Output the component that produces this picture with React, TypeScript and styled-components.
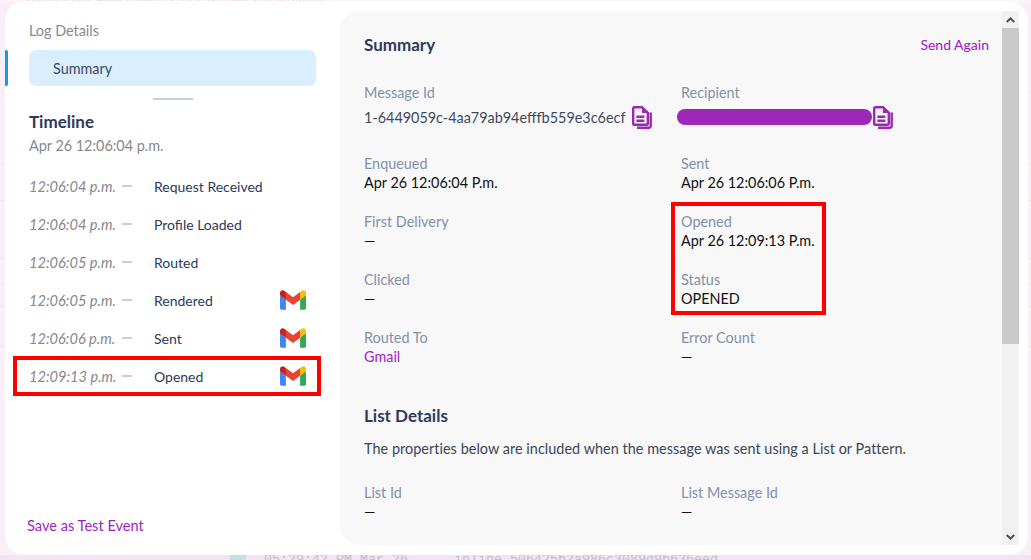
import styled, { createGlobalStyle } from "styled-components";

const purple = "#a01fc4";

const timeline = [
  { time: "12:06:04 p.m.", label: "Request Received" },
  { time: "12:06:04 p.m.", label: "Profile Loaded" },
  { time: "12:06:05 p.m.", label: "Routed" },
  { time: "12:06:05 p.m.", label: "Rendered", gmail: true },
  { time: "12:06:06 p.m.", label: "Sent", gmail: true },
  { time: "12:09:13 p.m.", label: "Opened", gmail: true, marked: true },
];

const backdropRows = [90, 73, 36, 58, 26, 22, 40];

function GmailIcon() {
  return (
    <svg width="26" height="20" viewBox="0 0 256 193">
      <path fill="#4285F4" d="M58.182 192.05V93.14L27.507 65.077 0 49.504v125.091c0 9.658 7.825 17.455 17.455 17.455h40.727Z" />
      <path fill="#34A853" d="M197.818 192.05h40.727c9.659 0 17.455-7.826 17.455-17.455V49.505l-31.156 17.837-27.026 25.798v98.91Z" />
      <path fill="#EA4335" d="m58.182 93.14-4.174-38.647 4.174-36.989L128 69.868l69.818-52.364 4.669 34.992-4.669 40.644L128 145.504z" />
      <path fill="#FBBC04" d="M197.818 17.504V93.14L256 49.504V26.231c0-21.585-24.64-33.89-41.89-20.945l-16.292 12.218Z" />
      <path fill="#C5221F" d="m0 49.504 26.759 20.07L58.182 93.14V17.504L41.89 5.286C24.61-7.66 0 4.646 0 26.23v23.273Z" />
    </svg>
  );
}

function CopyIcon() {
  return (
    <svg width="20" height="23" viewBox="0 0 20 23" fill="none" stroke="#9c27b0" strokeWidth="2.4">
      <path d="M2.2 1.2h7.8l5.8 5.6v11a1 1 0 0 1-1 1H2.2a1 1 0 0 1-1-1V2.2a1 1 0 0 1 1-1Z" />
      <path d="M10 2v5h5z" fill="#9c27b0" stroke="none" />
      <path d="M4.4 10.8h8M4.4 14.8h8" />
      <path d="M18.7 6.5V20a1.7 1.7 0 0 1-1.7 1.7H5" />
    </svg>
  );
}

function Chevron({ down }: { down?: boolean }) {
  return (
    <svg width="9" height="6" viewBox="0 0 9 6" fill="none" stroke="#505050" strokeWidth="2">
      <path d={down ? "M.7 1l3.8 3.6L8.3 1" : "M.7 5l3.8-3.6L8.3 5"} />
    </svg>
  );
}

export default function App() {
  return (
    <Page>
      <GlobalStyle />
      <Backdrop>
        <BackdropTop>Notifications Flow Templates Lists Patterns Log Attributes</BackdropTop>
        {backdropRows.map((height, i) => (
          <BackdropRow key={i} $height={height} />
        ))}
        <BackdropBottom>
          <BackdropIcon />
          <BackdropText>05:29:42 PM Mar 26</BackdropText>
          <BackdropText>inline_506425b2a986c3089d9b636eed</BackdropText>
        </BackdropBottom>
      </Backdrop>

      <Modal>
        <Sidebar>
          <ActiveBar />
          <SideHeading>Log Details</SideHeading>
          <SummaryTab>Summary</SummaryTab>
          <Divider />
          <TimelineTitle>Timeline</TimelineTitle>
          <TimelineDate>Apr 26 12:06:04 p.m.</TimelineDate>
          <TimelineList>
            {timeline.map((row) => (
              <TimelineRow key={row.time + row.label} $marked={row.marked}>
                <RowTime>{row.time}</RowTime>
                <RowDash />
                <RowLabel>{row.label}</RowLabel>
                {row.gmail && <GmailIcon />}
              </TimelineRow>
            ))}
          </TimelineList>
          <SaveLink>Save as Test Event</SaveLink>
        </Sidebar>

        <Panel>
          <PanelBody>
            <PanelHeader>
              <SectionTitle>Summary</SectionTitle>
              <SendAgain>Send Again</SendAgain>
            </PanelHeader>

            <FieldGrid>
              <IdField>
                <FieldLabel>Message Id</FieldLabel>
                <IdValue>
                  <MessageId>1-6449059c-4aa79ab94efffb559e3c6ecf</MessageId>
                  <CopyIcon />
                </IdValue>
              </IdField>
              <IdField>
                <FieldLabel>Recipient</FieldLabel>
                <IdValue>
                  <Redacted />
                  <CopyIcon />
                </IdValue>
              </IdField>
              <Field>
                <FieldLabel>Enqueued</FieldLabel>
                <FieldValue>Apr 26 12:06:04 P.m.</FieldValue>
              </Field>
              <Field>
                <FieldLabel>Sent</FieldLabel>
                <FieldValue>Apr 26 12:06:06 P.m.</FieldValue>
              </Field>
              <Field>
                <FieldLabel>First Delivery</FieldLabel>
                <FieldValue>—</FieldValue>
              </Field>
              <Field>
                <FieldLabel>Opened</FieldLabel>
                <FieldValue>Apr 26 12:09:13 P.m.</FieldValue>
              </Field>
              <Field>
                <FieldLabel>Clicked</FieldLabel>
                <FieldValue>—</FieldValue>
              </Field>
              <Field>
                <FieldLabel>Status</FieldLabel>
                <FieldValue>OPENED</FieldValue>
              </Field>
              <Field>
                <FieldLabel>Routed To</FieldLabel>
                <FieldValue $link>Gmail</FieldValue>
              </Field>
              <Field>
                <FieldLabel>Error Count</FieldLabel>
                <FieldValue>—</FieldValue>
              </Field>
            </FieldGrid>

            <ListTitle>List Details</ListTitle>
            <ListNote>The properties below are included when the message was sent using a List or Pattern.</ListNote>

            <FieldGrid>
              <Field>
                <FieldLabel>List Id</FieldLabel>
                <FieldValue>—</FieldValue>
              </Field>
              <Field>
                <FieldLabel>List Message Id</FieldLabel>
                <FieldValue>—</FieldValue>
              </Field>
            </FieldGrid>
          </PanelBody>

          <ScrollBar>
            <ScrollButton>
              <Chevron />
            </ScrollButton>
            <ScrollThumb />
            <ScrollRest />
            <ScrollButton>
              <Chevron down />
            </ScrollButton>
          </ScrollBar>
          <StatusMark />
        </Panel>
      </Modal>
    </Page>
  );
}

const GlobalStyle = createGlobalStyle`
  html, body {
    margin: 0;
    padding: 0;
    overflow: hidden;
  }
  body {
    font-family: "Lato", "Noto Sans", sans-serif;
    font-size: 14.4px;
  }
`;

const Page = styled.div`
  position: relative;
  width: 1031px;
  height: 560px;
  overflow: hidden;
  background: #f8f0f6;
`;

const Backdrop = styled.div`
  height: 100%;
  display: flex;
  flex-direction: column;
`;

const BackdropTop = styled.div`
  height: 2px;
  padding-left: 25px;
  font-size: 12px;
  line-height: 2px;
  color: #e3d8e6;
  background: #fbf5f8;
  overflow: hidden;
`;

const BackdropRow = styled.div<{ $height: number }>`
  height: ${(p) => p.$height}px;
  flex-shrink: 0;
  border-bottom: 1px solid #eee4ea;
  box-sizing: border-box;
`;

const BackdropBottom = styled.div`
  margin-top: auto;
  height: 5px;
  padding-left: 230px;
  display: flex;
  gap: 18px;
  background: #f2e5f1;
  overflow: hidden;
`;

const BackdropIcon = styled.div`
  width: 16px;
  height: 5px;
  background: #c4dde2;
`;

const BackdropText = styled.span`
  flex-shrink: 0;
  margin-right: 28px;
  font-family: "Liberation Mono", monospace;
  font-size: 13.33px;
  line-height: 9px;
  height: 5px;
  color: #c4bccb;
  white-space: pre;
`;

const Modal = styled.div`
  position: absolute;
  left: 5px;
  top: 1px;
  width: 1023px;
  height: 554px;
  box-sizing: border-box;
  padding: 10px 9px 10px 0;
  display: flex;
  background: #fff;
  border-radius: 20px;
`;

const Sidebar = styled.div`
  position: relative;
  width: 335px;
  flex-shrink: 0;
  display: flex;
  flex-direction: column;
  padding-left: 24px;
  box-sizing: border-box;
`;

const ActiveBar = styled.div`
  position: absolute;
  left: 0;
  top: 39px;
  width: 3px;
  height: 36px;
  background: #1f97e0;
  border-radius: 0 2px 2px 0;
`;

const SideHeading = styled.div`
  margin-top: 9px;
  height: 20px;
  line-height: 22px;
  color: #8a8a8e;
`;

const SummaryTab = styled.div`
  margin-top: 10px;
  width: 287px;
  height: 36px;
  padding-left: 24px;
  box-sizing: border-box;
  line-height: 38px;
  background: #d9eeff;
  border-radius: 7px;
  color: #3f4a66;
`;

const Divider = styled.div`
  margin: 12px 0 0 124px;
  width: 40px;
  height: 2px;
  background: #c5cfdb;
`;

const TimelineTitle = styled.div`
  margin-top: 11px;
  height: 20px;
  line-height: 22px;
  font-size: 17px;
  font-weight: 700;
  color: #2f3a5c;
`;

const TimelineDate = styled.div`
  margin-top: 4px;
  height: 20px;
  line-height: 22px;
  color: #87878c;
`;

const TimelineList = styled.div`
  margin-top: 12px;
  width: 277px;
  display: flex;
  flex-direction: column;
`;

const TimelineRow = styled.div<{ $marked?: boolean }>`
  position: relative;
  height: 38px;
  display: flex;
  align-items: center;
  ${(p) =>
    p.$marked &&
    `
    &::after {
      content: "";
      position: absolute;
      left: -16px;
      right: -15px;
      top: -1px;
      bottom: -1px;
      border: 4px solid #ff0000;
    }
  `}
`;

const RowTime = styled.span`
  width: 93px;
  font-style: italic;
  font-size: 14.6px;
  white-space: nowrap;
  color: #87878c;
`;

const RowDash = styled.span`
  width: 10px;
  height: 2px;
  margin-right: 22px;
  background: #c5cfdb;
`;

const RowLabel = styled.span`
  flex: 1;
  font-size: 14px;
  color: #2c3a58;
`;

const SaveLink = styled.div`
  margin: auto 0 0 -2px;
  padding-bottom: 8px;
  height: 24px;
  line-height: 26px;
  color: ${purple};
  font-size: 14.6px;
`;

const Panel = styled.div`
  position: relative;
  flex: 1;
  min-width: 0;
  display: flex;
  background: #f8f8f8;
  border-radius: 20px 0 0 20px;
  overflow: hidden;
`;

const PanelBody = styled.div`
  flex: 1;
  min-width: 0;
  padding: 22px 13px 0 24px;
  overflow: hidden;
`;

const PanelHeader = styled.div`
  display: flex;
  justify-content: space-between;
  align-items: center;
  height: 22px;
`;

const SectionTitle = styled.div`
  font-size: 17px;
  font-weight: 700;
  color: #2f3a5c;
`;

const SendAgain = styled.div`
  font-size: 14px;
  color: #a312cf;
`;

const FieldGrid = styled.div`
  display: grid;
  grid-template-columns: 317px 1fr;
`;

const Field = styled.div`
  height: 58px;
`;

const IdField = styled.div`
  height: 71px;
  margin-top: 27px;
`;

const FieldLabel = styled.div`
  height: 19px;
  line-height: 21px;
  color: #8291ab;
`;

const FieldValue = styled.div<{ $link?: boolean }>`
  height: 19px;
  line-height: 21px;
  color: ${(p) => (p.$link ? purple : "#111")};
`;

const IdValue = styled.div`
  display: flex;
  align-items: center;
  height: 24px;
  margin-top: 4px;
`;

const MessageId = styled.span`
  width: 268px;
  color: #3d4a5c;
  white-space: nowrap;
`;

const Redacted = styled.span`
  width: 195px;
  height: 16px;
  margin-left: -4px;
  margin-right: 1px;
  border-radius: 8px;
  background: #9c27b8;
`;

const ListTitle = styled.div`
  margin-top: 20px;
  height: 20px;
  line-height: 22px;
  font-size: 17px;
  font-weight: 700;
  color: #2f3a5c;
`;

const ListNote = styled.div`
  margin: 13px 0 24px;
  height: 20px;
  line-height: 22px;
  letter-spacing: 0.05px;
  white-space: nowrap;
  color: #3a4658;
`;

const ScrollBar = styled.div`
  width: 17px;
  flex-shrink: 0;
  display: flex;
  flex-direction: column;
  background: #f1f1f1;
`;

const ScrollButton = styled.div`
  height: 17px;
  flex-shrink: 0;
  display: flex;
  align-items: center;
  justify-content: center;
`;

const ScrollThumb = styled.div`
  height: 316px;
  flex-shrink: 0;
  background: #c9c9c9;
`;

const ScrollRest = styled.div`
  flex: 1;
`;

const StatusMark = styled.div`
  position: absolute;
  left: 331px;
  top: 191px;
  width: 155px;
  height: 113px;
  box-sizing: border-box;
  border: 4px solid #ff0000;
`;
